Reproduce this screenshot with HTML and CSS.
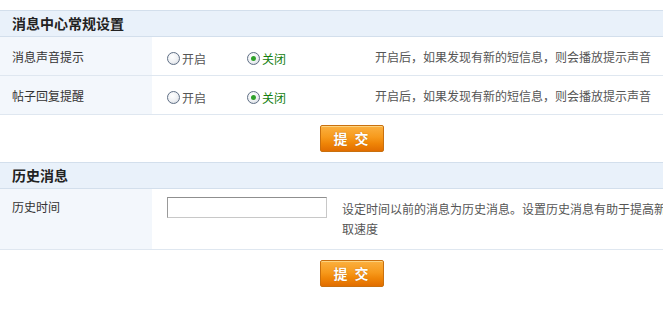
FILE: index.html
```html
<!DOCTYPE html>
<html lang="zh-CN">
<head>
<meta charset="utf-8">
<title>消息中心常规设置</title>
<link rel="stylesheet" href="styles.css">
</head>
<body>
<div class="page">
  <section class="sec">
    <h2 class="sec-head">消息中心常规设置</h2>
    <div class="row row-radio">
      <div class="cell-label">消息声音提示</div>
      <div class="cell-opts">
        <label class="opt"><span class="radio"></span>开启</label>
        <label class="opt on"><span class="radio checked"></span>关闭</label>
      </div>
      <div class="cell-desc">开启后，如果发现有新的短信息，则会播放提示声音</div>
    </div>
    <div class="row row-radio">
      <div class="cell-label">帖子回复提醒</div>
      <div class="cell-opts">
        <label class="opt"><span class="radio"></span>开启</label>
        <label class="opt on"><span class="radio checked"></span>关闭</label>
      </div>
      <div class="cell-desc">开启后，如果发现有新的短信息，则会播放提示声音</div>
    </div>
    <div class="actions"><button class="btn">提 交</button></div>
  </section>
  <section class="sec sec2">
    <h2 class="sec-head">历史消息</h2>
    <div class="row row-input">
      <div class="cell-label">历史时间</div>
      <div class="cell-input"><input class="txt" type="text"></div>
      <div class="cell-desc desc-wrap">设定时间以前的消息为历史消息。设置历史消息有助于提高新消息读取速度</div>
    </div>
    <div class="actions"><button class="btn">提 交</button></div>
  </section>
</div>
</body>
</html>
```

FILE: styles.css
```css
html, body {
  margin: 0;
  padding: 0;
  overflow: hidden;
  background: #fff;
}
body {
  font-family: "Noto Sans CJK SC", "DejaVu Sans", sans-serif;
  font-size: 12px;
  color: #333;
}
.page {
  width: 704px;
  padding-top: 10px;
}
.sec-head {
  margin: 0;
  height: 25px;
  line-height: 25px;
  padding-left: 12px;
  font-size: 14px;
  font-weight: bold;
  color: #222;
  background: #e9f1fa;
  border-top: 1px solid #d3dfec;
  border-bottom: 1px solid #d3dfec;
}
.row {
  display: grid;
  border-bottom: 1px solid #dfe7f0;
}
.row-radio {
  grid-template-columns: 152px 223px 1fr;
  height: 38px;
}
.row-input {
  grid-template-columns: 152px 190px 1fr;
}
.cell-label {
  background: #f3f7fc;
  padding-left: 12px;
  display: flex;
  align-items: center;
  color: #333;
}
.row-input .cell-label {
  align-items: flex-start;
  padding-top: 8px;
  line-height: 20px;
}
.cell-opts {
  display: flex;
  align-items: center;
  padding-left: 15px;
  padding-top: 4px;
}
.opt {
  display: flex;
  align-items: center;
  width: 80px;
  color: #555;
}
.opt.on {
  color: #14800f;
}
.radio {
  box-sizing: border-box;
  width: 13px;
  height: 13px;
  border-radius: 50%;
  border: 1px solid #5f6f85;
  background: radial-gradient(circle at 40% 35%, #ffffff 0%, #eef0f3 55%, #c9ced6 100%);
  margin-right: 2px;
  display: flex;
  align-items: center;
  justify-content: center;
}
.radio.checked::after {
  content: "";
  width: 5px;
  height: 5px;
  border-radius: 50%;
  background: #2fa12a;
}
.cell-desc {
  display: flex;
  align-items: center;
  color: #555;
  white-space: nowrap;
}
.desc-wrap {
  display: block;
  white-space: normal;
  width: 362px;
  line-height: 20px;
  padding: 10px 0;
}
.cell-input {
  padding-left: 15px;
  padding-top: 8px;
}
.txt {
  box-sizing: border-box;
  width: 160px;
  height: 21px;
  margin: 0;
  padding: 2px 4px;
  border: 1px solid #c8c8c8;
  border-top-color: #8f8f8f;
  border-left-color: #9a9a9a;
  background: #fff;
  font: inherit;
}
.actions {
  display: flex;
  justify-content: center;
  padding: 10px 0;
}
.btn {
  box-sizing: border-box;
  width: 64px;
  height: 27px;
  margin: 0;
  padding: 0;
  border: 1px solid #c9700e;
  border-radius: 2px;
  background: linear-gradient(#fbb040 0%, #f79a1c 45%, #ef8507 70%, #e16d00 100%);
  box-shadow: inset 0 1px 0 #fdd37f;
  color: #fff;
  font-family: "Noto Sans CJK SC", sans-serif;
  font-size: 14px;
  font-weight: bold;
  letter-spacing: 2px;
  text-shadow: 0 0 1px #b25a00;
  line-height: 25px;
  cursor: pointer;
}
```
